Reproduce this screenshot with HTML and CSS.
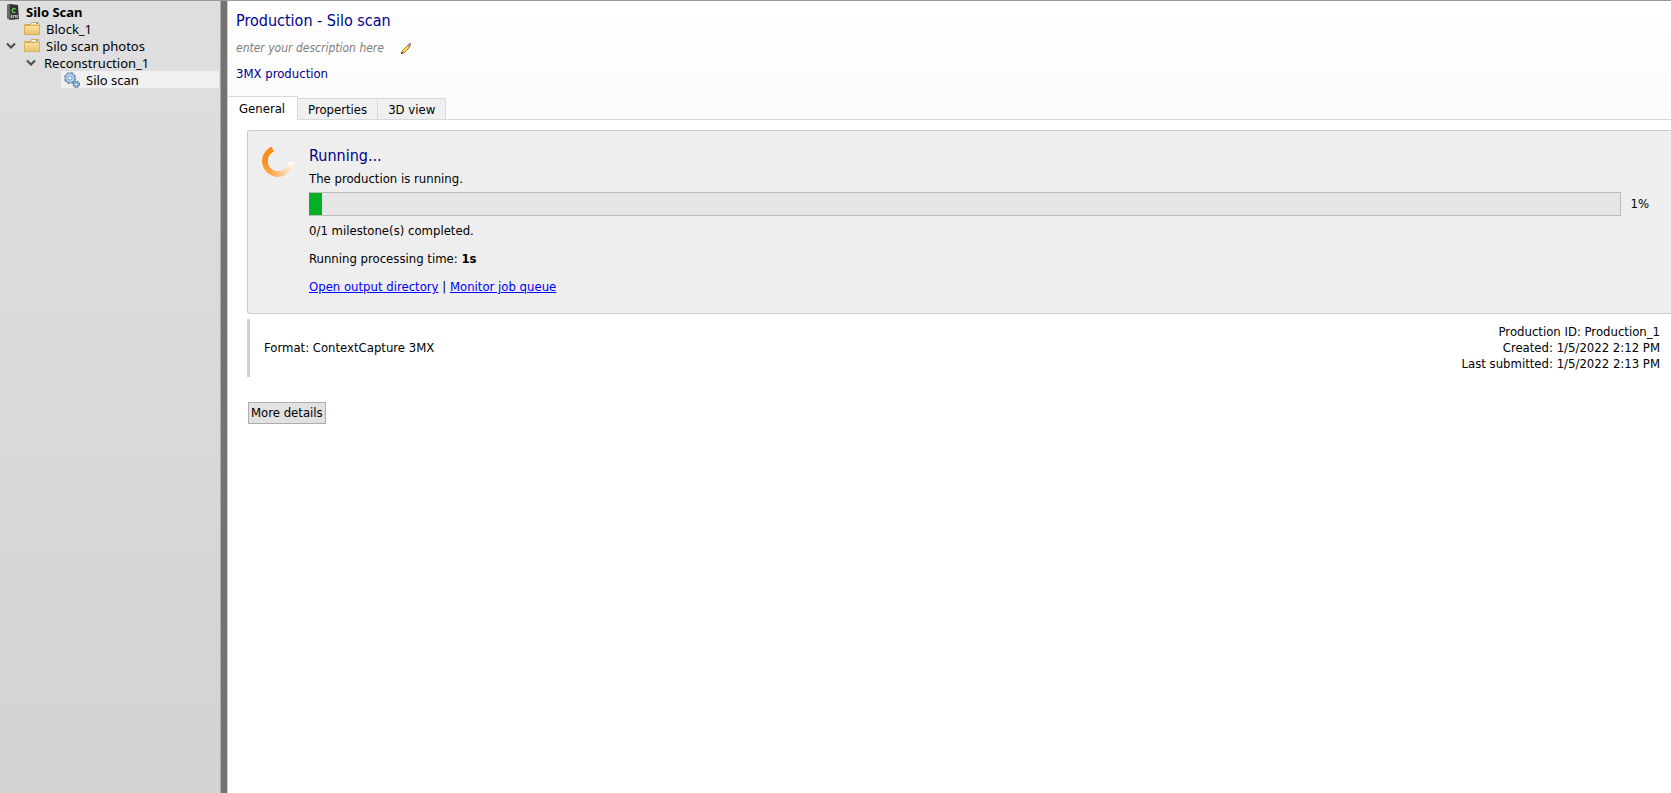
FILE: index.html
```html
<!DOCTYPE html>
<html lang="en">
<head>
    <meta charset="UTF-8">
    <meta name="viewport" content="width=device-width, initial-scale=1.0">
    <title>Production - Silo scan</title>
    <link rel="stylesheet" href="styles.css">
</head>
<body>
    <!-- shared icon shapes -->
    <svg class="defs" width="0" height="0" aria-hidden="true">
        <defs>
            <linearGradient id="folderFill" x1="0" y1="0" x2="0" y2="1">
                <stop offset="0" stop-color="#fbe3a3"/>
                <stop offset="1" stop-color="#e8c06a"/>
            </linearGradient>
            <symbol id="folder" viewBox="0 0 16 14">
                <path d="M.5 2.5h6l1-2h7l1 2v10H.5z" fill="#f3d488" stroke="#d3aa55"/>
                <path d="M8 1.5h6.500" stroke="#fff"/>
                <path d="M12 1.500h2" stroke="#38a4dc"/>
                <path d="M.5 3.5h15v9H.5z" fill="url(#folderFill)" stroke="#d8b05c"/>
            </symbol>
            <symbol id="chevron" viewBox="0 0 10 7">
                <path d="M1 1.500l4 4 4-4" fill="none" stroke="#4a4a4a" stroke-width="2"/>
            </symbol>
        </defs>
    </svg>

    <div class="app">
        <nav class="sidebar">
            <ul class="tree">
                <li class="tree-row root">
                    <svg class="icon-root" viewBox="0 0 12 16">
                        <path d="M0 1l3-1 8 1 1 14-9 1-3-2z" fill="#303231"/>
                        <path d="M0 1l3-1v16l-3-2z" fill="#686a69"/>
                        <path d="M8.500 5.200A2 2 0 1 0 8.500 8" fill="none" stroke="#67bd57" stroke-width="1.500"/>
                        <path d="M3.500 11h1.500v3h-1.500M3.500 12.500h1.500M6.500 14v-3l1 1 1-1v3M9.500 11l1.500 3M11 11l-1.500 3" fill="none" stroke="#d0d0d0" stroke-width=".8"/>
                    </svg>
                    <span>Silo Scan</span>
                </li>
                <li class="tree-row block">
                    <span class="toggle"></span>
                    <svg class="icon-folder"><use href="#folder"/></svg>
                    <span>Block_1</span>
                </li>
                <li class="tree-row block">
                    <button class="toggle" aria-label="Collapse Silo scan photos"><svg><use href="#chevron"/></svg></button>
                    <svg class="icon-folder"><use href="#folder"/></svg>
                    <span>Silo scan photos</span>
                </li>
                <li class="tree-row reconstruction">
                    <button class="toggle" aria-label="Collapse Reconstruction_1"><svg><use href="#chevron"/></svg></button>
                    <span>Reconstruction_1</span>
                </li>
                <li class="tree-row production selected">
                    <svg class="icon-gears" viewBox="0 0 16 16">
                        <circle cx="6" cy="6" r="5.200" fill="none" stroke="#587fa6" stroke-width="1.500" stroke-dasharray="2.500 1.584"/>
                        <circle cx="6" cy="6" r="3.500" fill="none" stroke="#587fa6" stroke-width="3.400"/>
                        <circle cx="6" cy="6" r="3.500" fill="none" stroke="#a9cbed" stroke-width="2.400"/>
                        <circle cx="12.300" cy="12.300" r="3" fill="none" stroke="#466d94" stroke-width="1.400" stroke-dasharray="1.500 .856"/>
                        <circle cx="12.300" cy="12.300" r="1.900" fill="#e8f0f8" stroke="#7fa5cc" stroke-width="1.700"/>
                    </svg>
                    <span>Silo scan</span>
                </li>
            </ul>
        </nav>

        <main class="content">
            <header class="header">
                <h1>Production - Silo scan</h1>
                <div class="description">
                    <em>enter your description here</em>
                    <button class="edit" aria-label="Edit description">
                        <svg viewBox="0 0 10 11">
                            <path d="M.5 10.500l1-3 5.500-5.500 2 2-5.500 5.500z" fill="#f2cf2f" stroke="#8b6720" stroke-width=".8"/>
                            <path d="M2.500 8l5-5" stroke="#fff27a"/>
                            <path d="M0 11l1-3.500 2.500 2.500z" fill="#c9824f"/>
                            <path d="M0 11l.5-2 1.500 1.500z" fill="#33251d"/>
                            <path d="M6 2.500l1.500-1.500 2 2-1.500 1.500z" fill="#8f9aa8"/>
                            <path d="M7.500 1l.8-.7h1.200l.3.400v1.400l-.8.700z" fill="#e07880" stroke="#8f5159" stroke-width=".5"/>
                        </svg>
                    </button>
                </div>
                <p class="kind">3MX production</p>
            </header>

            <div class="tabs" role="tablist">
                <button class="tab active" role="tab" aria-selected="true">General</button>
                <button class="tab" role="tab" aria-selected="false">Properties</button>
                <button class="tab" role="tab" aria-selected="false">3D view</button>
            </div>

            <section class="panel">
                <div class="status">
                    <div class="spinner"></div>
                    <div class="status-body">
                        <h2>Running...</h2>
                        <label for="jobProgress">The production is running.</label>
                        <div class="progress-row">
                            <progress id="jobProgress" value="1" max="100"></progress>
                            <span>1%</span>
                        </div>
                        <p>0/1 milestone(s) completed.</p>
                        <p>Running processing time: <b>1s</b></p>
                        <p><a href="#">Open output directory</a> | <a href="#">Monitor job queue</a></p>
                    </div>
                </div>

                <div class="info">
                    <p>Format: ContextCapture 3MX</p>
                    <div class="info-meta">
                        <p>Production ID: Production_1</p>
                        <p>Created: 1/5/2022 2:12 PM</p>
                        <p>Last submitted: 1/5/2022 2:13 PM</p>
                    </div>
                </div>

                <button class="more">More details</button>
            </section>
        </main>
    </div>
</body>
</html>
```
FILE: styles.css
```css
* {
    box-sizing: border-box;
}
body {
    margin: 0;
    font-family: Tahoma, "DejaVu Sans Condensed", "DejaVu Sans", sans-serif;
    font-size: 13px;
    line-height: 16px;
    color: #000;
    background-color: #fff;
}
h1, h2, p, ul {
    margin: 0;
    padding: 0;
}
button {
    font: inherit;
    color: inherit;
    cursor: pointer;
}
.defs {
    position: absolute;
}
.app {
    display: flex;
    min-height: 100vh;
    border-top: 1px solid #999;
}

/* project tree */
.sidebar {
    flex: 0 0 227px;
    padding-top: 2px;
    border-right: 6px solid #757272;
    box-shadow: inset -1px 0 #aaa;
    background: linear-gradient(#dfdfdf, #d3d3d3);
}
.tree {
    list-style: none;
    font-family: "Segoe UI", "Noto Sans", sans-serif;
    font-size: 13px;
    line-height: 17px;
}
.tree-row {
    display: flex;
    align-items: center;
    gap: 6px;
    height: 17px;
    margin-right: 2px;
    white-space: nowrap;
}
.tree-row span {
    padding-top: 2px;
}
.root {
    padding-left: 7px;
    gap: 7px;
    font-weight: bold;
}
.block {
    padding-left: 6px;
}
.reconstruction {
    padding-left: 26px;
    gap: 8px;
}
.production {
    margin-left: 61px;
    padding-left: 3px;
}
.selected {
    background-color: #f0f0f0;
}
.toggle {
    display: flex;
    flex: 0 0 10px;
    width: 10px;
    margin-right: 2px;
    padding: 0;
    border: none;
    background: none;
}
.reconstruction .toggle {
    margin-right: 0;
}
.toggle svg {
    width: 10px;
    height: 7px;
}
.icon-root {
    width: 12px;
    height: 16px;
}
.icon-folder {
    width: 16px;
    height: 14px;
}
.icon-gears {
    width: 16px;
    height: 16px;
}

/* page header */
.content {
    flex: 1;
    min-width: 0;
    border-left: 1px solid #ccc;
}
.header {
    height: 95px;
    padding: 9px 8px 0;
    color: #00008b;
    background: linear-gradient(#fff, #fbfbfb);
}
h1, h2 {
    font-size: 16px;
    line-height: 22px;
    font-weight: normal;
    color: #00008b;
}
.description {
    display: flex;
    align-items: center;
    gap: 17px;
    margin-top: 8px;
    font-size: 12px;
    color: #808080;
}
.edit {
    display: flex;
    padding: 0;
    border: none;
    background: none;
}
.edit svg {
    width: 10px;
    height: 11px;
}
.kind {
    margin-top: 10px;
}

/* tabs */
.tabs {
    display: flex;
    align-items: flex-end;
    height: 24px;
    border-bottom: 1px solid #d9d9d9;
    background-color: #fcfcfc;
}
.tab {
    height: 21px;
    padding: 1px 10px 0;
    border: 1px solid #d9d9d9;
    border-width: 1px 1px 0 0;
    background-color: #f0f0f0;
}
.tab.active {
    height: 24px;
    margin-bottom: -1px;
    padding: 0 12px 0 11px;
    background-color: #fff;
}

/* general tab */
.panel {
    padding: 10px 0 0 19px;
}
.status {
    display: flex;
    gap: 15px;
    padding: 14px 22px 6px 14px;
    border: 1px solid #ccc;
    border-right: none;
    border-radius: 3px 0 0 3px;
    background-color: #eee;
}
.spinner {
    flex: 0 0 32px;
    height: 32px;
    border-radius: 50%;
    background: conic-gradient(transparent 94deg, #fff 96deg, #fdb164 190deg, #ff8c14 270deg, #ff8c14 335deg, transparent 337deg);
    mask: radial-gradient(closest-side, transparent 62%, #000 66%);
}
.status-body {
    flex: 1;
}
.status-body h2 {
    margin-bottom: 4px;
}
.status-body label {
    display: block;
}
.status-body p {
    margin-bottom: 12px;
}
.progress-row {
    display: flex;
    align-items: center;
    gap: 9px;
    margin: 5px 0 7px;
}
progress {
    flex: 1;
    height: 24px;
    appearance: none;
    border: 1px solid #bcbcbc;
    border-left: none;
    background-color: #e6e6e6;
}
progress::-webkit-progress-bar {
    background-color: #e6e6e6;
}
progress::-webkit-progress-value {
    background-color: #06b025;
}
a {
    color: #00f;
}
.info {
    display: flex;
    align-items: center;
    justify-content: space-between;
    margin-top: 5px;
    padding: 5px 11px 5px 14px;
    border-left: 3px solid #d0d0d0;
}
.info-meta {
    text-align: right;
}
.more {
    margin: 25px 0 0 1px;
    padding: 2px;
    border: 1px solid #adadad;
    background-color: #e1e1e1;
}
```
